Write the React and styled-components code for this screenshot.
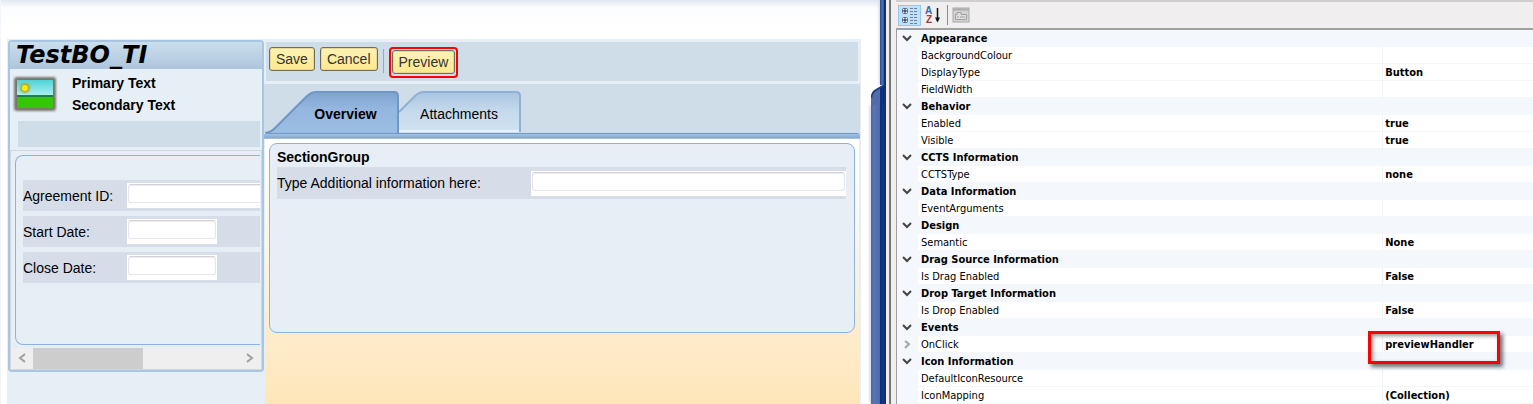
import React, { useState } from 'react';
import styled, { createGlobalStyle } from 'styled-components';

const GlobalStyle = createGlobalStyle`
  * {
    box-sizing: border-box;
  }

  body {
    margin: 0;
    background: #fff;
    color: #000;
    font-family: "Liberation Sans", Arial, sans-serif;
    font-size: 14px;
  }

  button, input {
    font: inherit;
    color: inherit;
  }
`;

const Workspace = styled.div`
  display: grid;
  grid-template-columns: minmax(0, 886fr) minmax(0, 647fr);
  min-height: 100vh;
`;

/* ---------- floorplan preview ---------- */

const Preview = styled.div`
  display: grid;
  grid-template-columns: 7px minmax(0, 1fr) 25px;
  background: linear-gradient(#e1e8f1, #fcfdfe 8px, #fff 30px);
`;

const LeftEdge = styled.div`
  border-left: 1px solid #f3f5fa;
`;

const Page = styled.div`
  display: grid;
  grid-template-columns: 257px minmax(0, 1fr);
  margin-top: 39px;
  background: #e7eff6;
`;

const RightEdge = styled.div`
  display: flex;
  flex-direction: column;
  align-items: flex-end;
`;

const ThinRail = styled.div`
  width: 6px;
  height: 85px;
  flex: none;
  background: linear-gradient(to right, #2a4a8c, #4a6fb0 2px, #35599f 4px, #0f2f78 4px, #12317c);
  box-shadow: -1px 0 3px #cdd4e6;
`;

const WideRail = styled.svg`
  position: relative;
  z-index: 1;
  display: block;
  width: 15px;
  height: 20px;
  flex: none;
`;

const RailBody = styled.div`
  width: 15px;
  flex: 1;
  background: linear-gradient(to right, #4a66a4, #5a77b4 3px, #4a69aa 9px, #0d2c74 9px, #143680 12px, #0d2c74);
  box-shadow: -1px 0 3px #c3cbdf;
`;

const Card = styled.aside`
  align-self: start;
  margin: 1px 0 0 1px;
  border: 2px solid #a8c5e3;
  border-radius: 4px;
`;

const CardTitle = styled.h1`
  margin: 0;
  padding-left: 6px;
  background: linear-gradient(#cbdeec, #adc5dc);
  font-family: "DejaVu Sans", Verdana, sans-serif;
  font-size: 24px;
  font-style: italic;
  font-weight: bold;
  line-height: 27px;
`;

const Identity = styled.div`
  display: flex;
  gap: 14px;
  padding: 3px 2px 5px;
  font-weight: bold;
  line-height: 22px;
`;

const FlagIcon = styled.svg`
  width: 46px;
  height: 40px;
  margin-top: 3px;
`;

const Strip = styled.div`
  height: 26px;
  margin: 0 2px 3px 8px;
  background: #cfdde8;
`;

const ScrollBox = styled.div`
  overflow: hidden;
  border: 1px solid #d1d9df;
`;

const DetailGroup = styled.div`
  display: flex;
  flex-direction: column;
  gap: 5px;
  height: 190px;
  margin: 4px 1px 3px 4px;
  padding: 24px 0 0 7px;
  overflow: hidden;
  border: 1px solid #8ab3df;
  border-right: 0;
  border-radius: 8px 0 0 8px;
`;

const FieldRow = styled.div`
  display: grid;
  grid-template-columns: ${props => props.$labelWidth} minmax(0, 1fr);
  align-items: center;
  height: ${props => props.$tall ? '32px' : '31px'};
  background: #d6dde8;
`;

const FieldBox = styled.div`
  width: ${props => props.$width || '100%'};
  height: 25px;
  padding: 1px 1px 0;
  background: #fff;
`;

const FieldInput = styled.input`
  display: block;
  width: 100%;
  height: 19px;
  padding: 0 3px;
  border: 1px solid #e6e5eb;
  border-top-color: #d3d1d7;
  border-radius: 3px;
  background: #fff;
  box-shadow: inset 0 1px 1px #ececf0;
  outline: none;
`;

const ScrollBar = styled.div`
  display: grid;
  grid-template-columns: 22px minmax(0, 1fr) 24px;
  height: 21px;
  background: #efefef;
`;

const ScrollArrow = styled.button`
  display: flex;
  align-items: center;
  justify-content: center;
  padding: 0;
  border: 0;
  background: none;
`;

const ScrollThumb = styled.div`
  width: 110px;
  height: 100%;
  background: #cdcdcd;
`;

const Main = styled.main`
  display: flex;
  flex-direction: column;
  padding-right: 1px;
`;

const Toolbar = styled.div`
  display: flex;
  gap: 5px;
  height: 39px;
  margin: 3px 2px 3px 2px;
  padding: 5px 3px;
  background: #cfdde8;
`;

const ToolButton = styled.button`
  height: 24px;
  padding: 0 6px;
  border: 1px solid #6f6d60;
  border-radius: 3px;
  background: linear-gradient(#fdf2b4, #fee88f);
  box-shadow: inset 0 0 0 1px #e9d792;
  color: #333;
  line-height: 20px;
`;

const ToolDivider = styled.span`
  width: 1px;
  height: 24px;
  margin-top: 2px;
  background: #8fabc9;
`;

const Marked = styled.div`
  height: 31px;
  padding: 1px;
  border: 2px solid #f00;
  border-radius: 4px;
`;

const TabStrip = styled.div`
  display: flex;
  height: 49px;
  padding-top: 7px;
  background: #cfdde8;
`;

const Tab = styled.button`
  position: relative;
  width: ${props => props.$active ? '135px' : '122px'};
  height: 42px;
  padding: ${props => props.$active ? '3px 0 0 28px' : '3px 2px 0 0'};
  border: 0;
  background: none;
  font-weight: ${props => props.$active ? 'bold' : 'normal'};
`;

const TabShape = styled.svg`
  position: absolute;
  inset: 0;
  width: 100%;
  height: 100%;
`;

const TabLabel = styled.span`
  position: relative;
`;

const TabBar = styled.div`
  height: 6px;
  border-top: 1px solid #6d9ac9;
  border-bottom: 1px solid #a9bfda;
  border-radius: 3px 3px 0 0;
  background: linear-gradient(#a3c3e4, #83a8d3);
`;

const Canvas = styled.div`
  flex: 1;
  padding: 4px;
  margin: 0 1px;
  background: linear-gradient(#fff, #fffaf0 60px, #feeccd 190px, #fee6b9 265px);
`;

const Section = styled.section`
  height: 190px;
  padding: 0 8px 0 7px;
  border: 1px solid #8ab3df;
  border-radius: 8px;
  background: #e7eef5;
`;

const SectionTitle = styled.h2`
  margin: 0;
  padding-top: 3px;
  font-size: 14px;
  line-height: 20px;
`;

/* ---------- property grid ---------- */

const Designer = styled.div`
  padding-left: 3px;
  background: #f0eeee;
`;

const DesignerFrame = styled.div`
  min-height: 100%;
  padding-left: 5px;
  border-left: 2px solid #777;
  font-family: "DejaVu Sans Condensed", Tahoma, sans-serif;
  font-size: 11px;
`;

const GridTools = styled.div`
  display: flex;
  align-items: center;
  gap: 4px;
  height: 28px;
  padding: 0 2px;
  border-top: 2px solid #cfcfcf;
`;

const GridTool = styled.button`
  display: flex;
  align-items: center;
  justify-content: center;
  width: ${props => props.$pressed ? '23px' : '18px'};
  height: 21px;
  padding: 0;
  border: ${props => props.$pressed ? '1px solid #90c8f6' : '0'};
  background: ${props => props.$pressed ? '#c4e0f6' : 'none'};
`;

const GridDivider = styled.span`
  width: 1px;
  height: 20px;
  background: #8c8c8c;
`;

const PropertyTable = styled.table`
  width: 100%;
  table-layout: fixed;
  border-collapse: separate;
  border-spacing: 0;
  border-top: 2px solid #a0a0a0;
  border-left: 1px solid #a0a0a0;
  background: #fff;
`;

const MarginCell = styled.td`
  height: 17px;
  padding: 0 0 0 5px;
  background: #f4f7fc;
  line-height: 0;
`;

const Expander = styled.button`
  width: 11px;
  height: 11px;
  padding: 0;
  border: 0;
  background: none;
`;

const CategoryCell = styled.th`
  padding: 0 3px;
  background: #f4f7fc;
  line-height: 16px;
  text-align: left;
`;

const NameCell = styled.th`
  padding: 2px 3px 0;
  border-bottom: 1px solid #f4f6fa;
  font-weight: normal;
  line-height: 14px;
  text-align: left;
`;

const ValueCell = styled.td`
  position: relative;
  padding: 2px 2px 0;
  border-bottom: 1px solid #f4f6fa;
  border-left: 1px solid #f0f2f7;
  font-weight: bold;
  line-height: 14px;
`;

const Callout = styled.span`
  position: absolute;
  z-index: 1;
  top: -5px;
  left: -15px;
  width: 132px;
  height: 33px;
  border: 3px solid #f00;
  box-shadow: 3px 3px 4px rgba(0, 0, 0, 0.55), inset 2px 2px 4px rgba(0, 0, 0, 0.4);
`;

const categories = [
  { name: 'Appearance', items: [['BackgroundColour', ''], ['DisplayType', 'Button'], ['FieldWidth', '']] },
  { name: 'Behavior', items: [['Enabled', 'true'], ['Visible', 'true']] },
  { name: 'CCTS Information', items: [['CCTSType', 'none']] },
  { name: 'Data Information', items: [['EventArguments', '']] },
  { name: 'Design', items: [['Semantic', 'None']] },
  { name: 'Drag Source Information', items: [['Is Drag Enabled', 'False']] },
  { name: 'Drop Target Information', items: [['Is Drop Enabled', 'False']] },
  { name: 'Events', items: [['OnClick', 'previewHandler']] },
  { name: 'Icon Information', items: [['DefaultIconResource', ''], ['IconMapping', '(Collection)']] }
];

const Flag = () => (
  <FlagIcon viewBox="0 0 46 40" aria-hidden="true">
    <defs>
      <linearGradient id="sky" x1="0" y1="0" x2="0" y2="1">
        <stop offset="0" stopColor="#4fd3d6" />
        <stop offset="1" stopColor="#b4f3f4" />
      </linearGradient>
      <filter id="soft">
        <feGaussianBlur stdDeviation="1" />
      </filter>
    </defs>
    <rect x="2" y="2" width="42" height="34" rx="3" fill="#77776a" filter="url(#soft)" />
    <rect x="5" y="5" width="36" height="17" fill="url(#sky)" />
    <rect x="5" y="20" width="36" height="2" fill="#247c4a" />
    <rect x="5" y="22" width="36" height="11" fill="#35c60a" />
    <circle cx="13" cy="13" r="5" fill="#b0a52c" filter="url(#soft)" />
    <circle cx="13" cy="13" r="3" fill="#ffee00" />
  </FlagIcon>
);

const Chevron = ({ color, d }) => (
  <svg width="11" height="11" viewBox="0 0 11 11" aria-hidden="true">
    <path d={d} fill="none" stroke={color} strokeWidth="2" />
  </svg>
);

const Field = ({ id, label, width, labelWidth, tall }) => (
  <FieldRow $labelWidth={labelWidth} $tall={tall}>
    <label htmlFor={id}>{label}</label>
    <FieldBox $width={width}>
      <FieldInput id={id} type="text" />
    </FieldBox>
  </FieldRow>
);

const Sidebar = () => (
  <Card>
    <CardTitle>TestBO_TI</CardTitle>
    <Identity>
      <Flag />
      <div>
        <div>Primary Text</div>
        <div>Secondary Text</div>
      </div>
    </Identity>
    <Strip />
    <ScrollBox>
      <DetailGroup>
        <Field id="agreement" label="Agreement ID:" width="200px" labelWidth="104px" />
        <Field id="start" label="Start Date:" width="90px" labelWidth="104px" />
        <Field id="close" label="Close Date:" width="90px" labelWidth="104px" />
      </DetailGroup>
      <ScrollBar>
        <ScrollArrow type="button" aria-label="Scroll left">
          <Chevron color="#a0a0a0" d="M8 1 L3 5 L8 9" />
        </ScrollArrow>
        <ScrollThumb />
        <ScrollArrow type="button" aria-label="Scroll right">
          <Chevron color="#a0a0a0" d="M3 1 L8 5 L3 9" />
        </ScrollArrow>
      </ScrollBar>
    </ScrollBox>
  </Card>
);

const Tabs = () => {
  const [active, setActive] = useState('overview');

  return (
    <>
      <TabStrip role="tablist">
        <Tab $active role="tab" aria-selected={active === 'overview'} onClick={() => setActive('overview')}>
          <TabShape viewBox="0 0 135 42" preserveAspectRatio="none" aria-hidden="true">
            <defs>
              <linearGradient id="tabOn" x1="0" y1="0" x2="0" y2="1">
                <stop offset="0" stopColor="#7ea2cf" />
                <stop offset="0.4" stopColor="#94b6df" />
                <stop offset="1" stopColor="#9cbde3" />
              </linearGradient>
            </defs>
            <path d="M1 42 C8 41 10 38 14 34 L42 6 C46 2 48 1 52 1 H130 Q134 1 134 5 V42 Z" fill="url(#tabOn)" />
            <path d="M1 42 C8 41 10 38 14 34 L42 6 C46 2 48 1 52 1 H130 Q134 1 134 5 V42" fill="none" stroke="#6f97c5" strokeWidth="2" />
          </TabShape>
          <TabLabel>Overview</TabLabel>
        </Tab>
        <Tab role="tab" aria-selected={active === 'attachments'} onClick={() => setActive('attachments')}>
          <TabShape viewBox="0 0 122 42" preserveAspectRatio="none" aria-hidden="true">
            <defs>
              <linearGradient id="tabOff" x1="0" y1="0" x2="0" y2="1">
                <stop offset="0" stopColor="#a9c5e2" />
                <stop offset="0.5" stopColor="#c6daec" />
                <stop offset="1" stopColor="#d2e2f0" />
              </linearGradient>
            </defs>
            <path d="M0 21 L16 5 Q20 1 25 1 H117 Q121 1 121 5 V41 H0 Z" fill="url(#tabOff)" />
            <path d="M0 21 L16 5 Q20 1 25 1 H117 Q121 1 121 5 V41" fill="none" stroke="#8fb1d5" strokeWidth="2" />
            <path d="M0 40 H120" stroke="#e6f0f8" strokeWidth="2" />
          </TabShape>
          <TabLabel>Attachments</TabLabel>
        </Tab>
      </TabStrip>
      <TabBar />
    </>
  );
}

const PropertyGrid = () => (
  <Designer>
    <DesignerFrame>
      <GridTools>
        <GridTool $pressed type="button" aria-label="Categorized">
          <svg width="18" height="17" viewBox="0 0 18 17" aria-hidden="true">
            <g fill="#fff" stroke="#4d6f9e">
              <rect x="1.5" y="1.5" width="5" height="5" rx="1" />
              <rect x="1.5" y="10.5" width="5" height="5" rx="1" />
            </g>
            <path d="M2 4 H6 M4 2 V6 M2 13 H6 M4 11 V15" stroke="#123" />
            <path d="M9 1.5 H12 M13 1.5 H16 M9 4.5 H12 M13 4.5 H16 M9 7.5 H12 M13 7.5 H16 M9 10.5 H12 M13 10.5 H16 M9 13.5 H12 M13 13.5 H16 M9 16.5 H12 M13 16.5 H16" stroke="#66809f" />
          </svg>
        </GridTool>
        <GridTool type="button" aria-label="Alphabetical">
          <svg width="18" height="18" viewBox="0 0 18 18" aria-hidden="true">
            <g fontFamily="Liberation Sans, sans-serif" fontSize="10" fontWeight="bold">
              <text x="0" y="8" fill="#3a66a8">A</text>
              <text x="1" y="17" fill="#9c3f3f">Z</text>
            </g>
            <path d="M12.5 2 V15" stroke="#111" strokeWidth="1.5" />
            <path d="M10 11.5 L12.5 16.5 L15 11.5 Z" fill="#111" />
          </svg>
        </GridTool>
        <GridDivider />
        <GridTool type="button" disabled aria-label="Property Pages">
          <svg width="18" height="16" viewBox="0 0 18 16" aria-hidden="true">
            <rect x="1" y="1" width="16" height="14" fill="#d2d2d2" stroke="#a9a9a9" />
            <path d="M1 2.5 H17" stroke="#acacac" strokeWidth="2" />
            <path d="M3.5 12.5 V7.5 H5 V5.5 H9 V7.5 H14.5 V12.5 Z" fill="#dedede" stroke="#a0a0a0" />
            <path d="M5 10 H7 M8 10 H13" stroke="#a0a0a0" />
          </svg>
        </GridTool>
      </GridTools>
      <PropertyTable>
        <colgroup>
          <col style={{ width: 21 }} />
          <col style={{ width: '73%' }} />
          <col />
        </colgroup>
        {categories.map(category => (
          <tbody key={category.name}>
            <tr>
              <MarginCell>
                <Expander type="button" aria-label={'Collapse ' + category.name}>
                  <Chevron color="#454545" d="M1 3 L5 7 L9 3" />
                </Expander>
              </MarginCell>
              <CategoryCell colSpan="2">{category.name}</CategoryCell>
            </tr>
            {category.items.map(([name, value]) => (
              <tr key={name}>
                <MarginCell>
                  {name === 'OnClick' && (
                    <Expander type="button" aria-label="Expand OnClick">
                      <Chevron color="#a3a3a3" d="M3 2 L7 5 L3 9" />
                    </Expander>
                  )}
                </MarginCell>
                <NameCell scope="row">{name}</NameCell>
                <ValueCell>
                  {value}
                  {name === 'OnClick' && <Callout />}
                </ValueCell>
              </tr>
            ))}
          </tbody>
        ))}
      </PropertyTable>
    </DesignerFrame>
  </Designer>
);

const App = () => {
  return (
    <>
      <GlobalStyle />
      <Workspace>
        <Preview>
          <LeftEdge />
          <Page>
            <Sidebar />
            <Main>
              <Toolbar>
                <ToolButton type="button">Save</ToolButton>
                <ToolButton type="button">Cancel</ToolButton>
                <ToolDivider />
                <Marked>
                  <ToolButton type="button">Preview</ToolButton>
                </Marked>
              </Toolbar>
              <Tabs />
              <Canvas>
                <Section>
                  <SectionTitle>SectionGroup</SectionTitle>
                  <Field id="additional" label="Type Additional information here:" labelWidth="254px" tall />
                </Section>
              </Canvas>
            </Main>
          </Page>
          <RightEdge>
            <ThinRail />
            <WideRail viewBox="0 0 15 20" aria-hidden="true">
              <path d="M15 0 V20 H0 V12 Q0 7 5 4 L12 0 Z" fill="#4f6dab" />
              <path d="M9 2 L15 0 V20 H9 Z" fill="#0f2f78" />
              <path d="M0.5 13 Q1 7 5 5 L15 -1" fill="none" stroke="#1d3d82" strokeWidth="1.5" />
            </WideRail>
            <RailBody />
          </RightEdge>
        </Preview>
        <PropertyGrid />
      </Workspace>
    </>
  );
}

export default App;
